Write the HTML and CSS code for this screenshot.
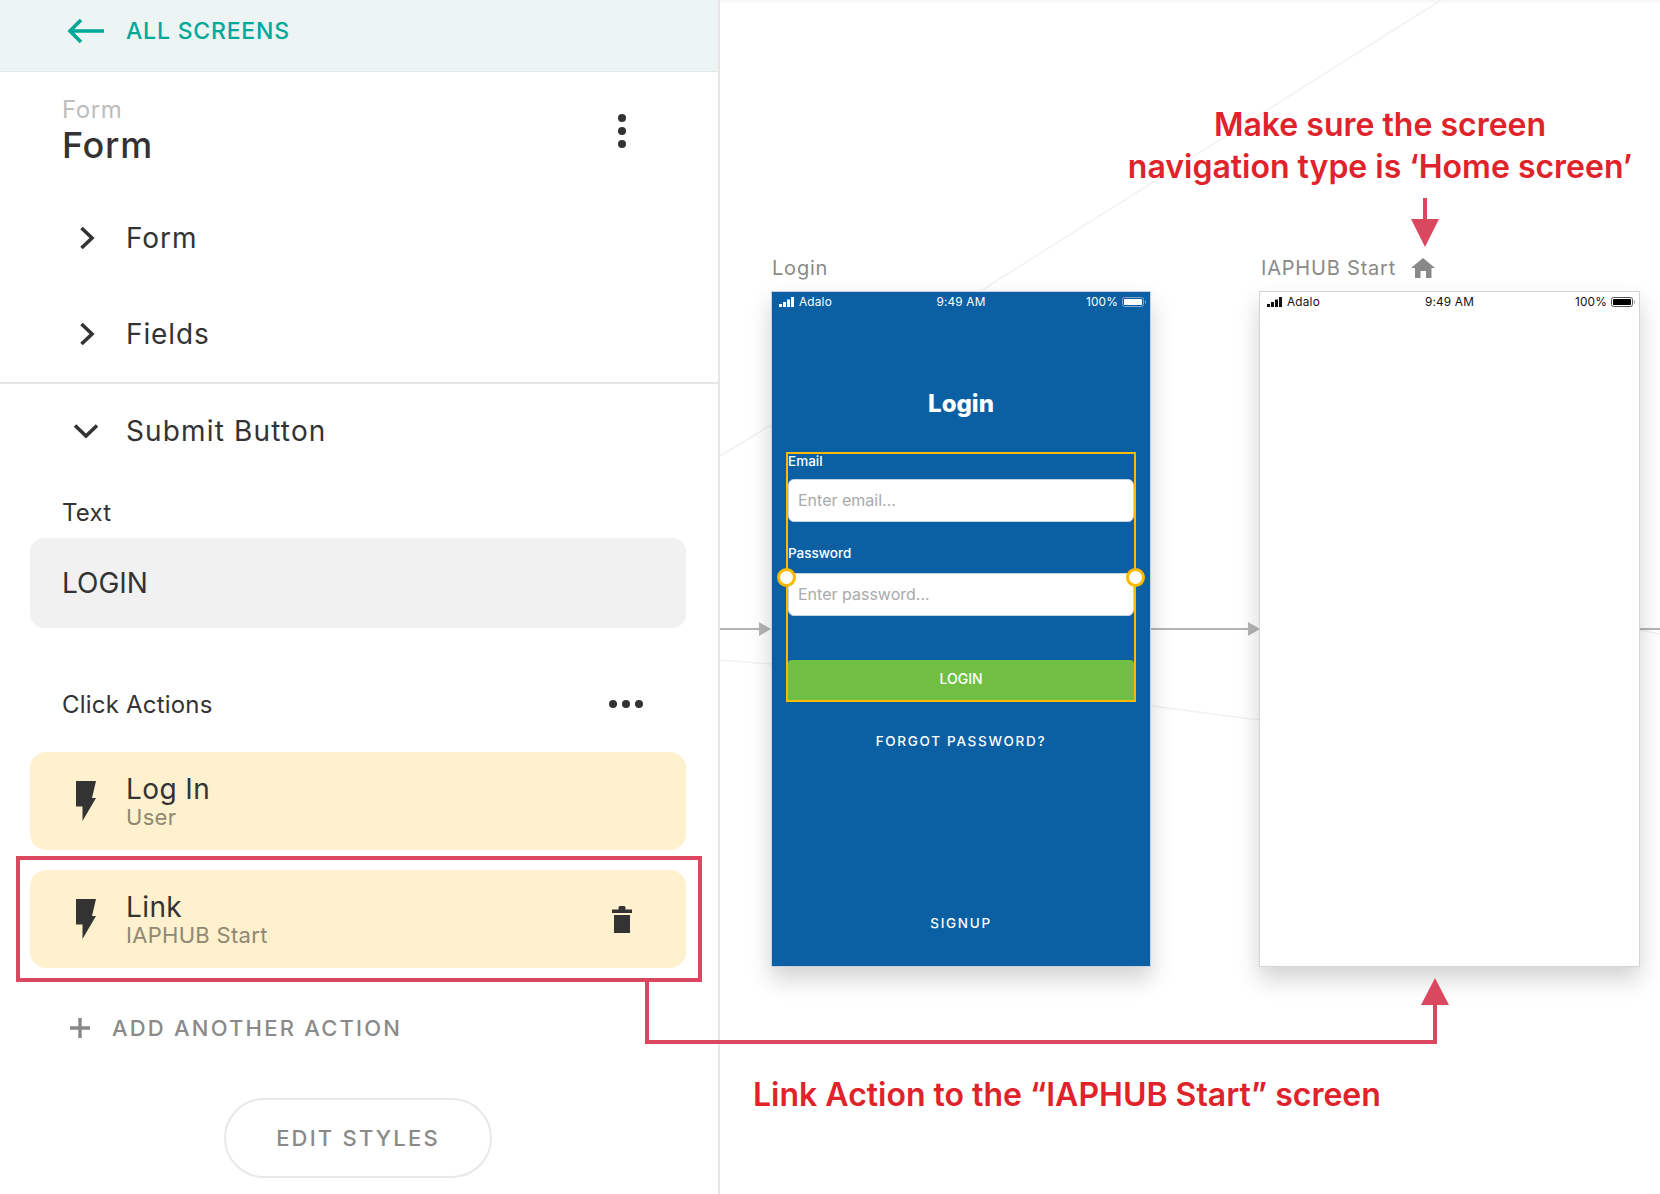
FILE: index.html
```html
<!DOCTYPE html>
<html lang="en">
<head>
<meta charset="utf-8">
<title>Form</title>
<link rel="stylesheet" href="styles.css">
</head>
<body>
<div class="app">
  <aside class="sidebar">
    <header class="back">
      <svg class="back-icon" width="38" height="26" viewBox="0 0 38 26"><path d="M37 13H3M14 2 3 13l11 11" fill="none" stroke="#00a898" stroke-width="3.6"/></svg>
      <span>ALL SCREENS</span>
    </header>
    <section class="title">
      <div>
        <div class="title-small">Form</div>
        <div class="title-big">Form</div>
      </div>
      <div class="kebab"><i></i><i></i><i></i></div>
    </section>
    <section class="group">
      <div class="row">
        <svg class="chev" width="16" height="24" viewBox="0 0 16 24"><path d="M2.5 2 13 12 2.5 22" fill="none" stroke="#333" stroke-width="3.6"/></svg>
        <span>Form</span>
      </div>
      <div class="row">
        <svg class="chev" width="16" height="24" viewBox="0 0 16 24"><path d="M2.5 2 13 12 2.5 22" fill="none" stroke="#333" stroke-width="3.6"/></svg>
        <span>Fields</span>
      </div>
    </section>
    <section class="submit">
      <div class="row row-open">
        <svg class="chev-down" width="26" height="16" viewBox="0 0 26 16"><path d="M2 2.5 13 13 24 2.5" fill="none" stroke="#333" stroke-width="3.6"/></svg>
        <span>Submit Button</span>
      </div>
      <div class="label label-text">Text</div>
      <div class="field">LOGIN</div>
      <div class="actions-head">
        <span class="label">Click Actions</span>
        <div class="dots"><i></i><i></i><i></i></div>
      </div>
      <div class="card">
        <svg class="bolt" width="20" height="40" viewBox="0 0 20 40"><path d="M0 0H20L16 17H20L6.500 40V25.500H0z" fill="#333"/></svg>
        <div class="card-text"><div class="card-title">Log In</div><div class="card-sub">User</div></div>
      </div>
      <div class="card card-second">
        <svg class="bolt" width="20" height="40" viewBox="0 0 20 40"><path d="M0 0H20L16 17H20L6.500 40V25.500H0z" fill="#333"/></svg>
        <div class="card-text"><div class="card-title">Link</div><div class="card-sub">IAPHUB Start</div></div>
        <svg class="trash" width="20" height="27" viewBox="0 0 20 27"><path d="M0 3.5h6.5V1.5Q6.5 0 8 0h4q1.500 0 1.500 1.500V3.500H20V7H0zM2 9h16v18H2z" fill="#333"/></svg>
      </div>
      <div class="add">
        <svg width="20" height="20" viewBox="0 0 20 20"><path d="M10 0v20M0 10h20" stroke="#888" stroke-width="3.400"/></svg>
        <span>ADD ANOTHER ACTION</span>
      </div>
      <div class="edit-wrap"><div class="edit">EDIT STYLES</div></div>
    </section>
  </aside>

  <main class="canvas">
    <svg class="wires" width="940" height="1194" viewBox="720 0 940 1194">
      <g fill="none" stroke="#f1f1f1" stroke-width="1.500">
        <path d="M1441 0 979 292"/>
        <path d="M720 456 771 425"/>
        <path d="M720 660 771 664"/>
        <path d="M1151 706 1260 720"/>
        <path d="M1640 630 1660 634"/>
      </g>
      <g stroke="#b5b5b5" stroke-width="2" fill="#b5b5b5">
        <path d="M720 629H760"/>
        <path d="M1151 629H1250"/>
        <path d="M1640 629H1660"/>
        <path d="M759 622 771 629 759 636z" stroke="none"/>
        <path d="M1248 622 1260 629 1248 636z" stroke="none"/>
      </g>
    </svg>

    <div class="screen screen-login">
      <div class="screen-name">Login</div>
      <div class="phone phone-blue">
        <div class="status">
          <div class="status-l">
            <svg width="15" height="10" viewBox="0 0 15 10"><path d="M0 7h3v3H0zM4 5h3v5H4zM8 2.500h3V10H8zM12 0h3v10h-3z" fill="currentColor"/></svg>
            <span>Adalo</span>
          </div>
          <div class="status-c">9:49 AM</div>
          <div class="status-r">
            <span>100%</span>
            <svg width="24" height="10" viewBox="0 0 24 10"><rect x=".5" y=".5" width="21" height="9" rx="2" fill="none" stroke="#7fa9cf"/><rect x="2" y="2" width="18" height="6" rx=".6" fill="#fff"/><path d="M23 3v4l1-1V4z" fill="#7fa9cf"/></svg>
          </div>
        </div>
        <h1 class="login-title">Login</h1>
        <div class="selection">
          <div class="f-label">Email</div>
          <div class="input">Enter email...</div>
          <div class="f-label f-label-2">Password</div>
          <div class="input">Enter password...</div>
          <div class="login-btn">LOGIN</div>
          <span class="handle handle-l"></span>
          <span class="handle handle-r"></span>
        </div>
        <div class="forgot">FORGOT PASSWORD?</div>
        <div class="signup">SIGNUP</div>
      </div>
    </div>

    <div class="screen screen-home">
      <div class="screen-name">
        <span>IAPHUB Start</span>
        <svg width="24" height="20" viewBox="0 0 24 20"><path d="M12 0 24 10H20.500V20H15V13H9.500V20H4V10H0z" fill="#888"/></svg>
      </div>
      <div class="phone phone-white">
        <div class="status">
          <div class="status-l">
            <svg width="15" height="10" viewBox="0 0 15 10"><path d="M0 7h3v3H0zM4 5h3v5H4zM8 2.500h3V10H8zM12 0h3v10h-3z" fill="currentColor"/></svg>
            <span>Adalo</span>
          </div>
          <div class="status-c">9:49 AM</div>
          <div class="status-r">
            <span>100%</span>
            <svg width="24" height="10" viewBox="0 0 24 10"><rect x=".5" y=".5" width="21" height="9" rx="2" fill="none" stroke="#555"/><rect x="2" y="2" width="18" height="6" rx=".6" fill="#000"/><path d="M23 3v4l1-1V4z" fill="#999"/></svg>
          </div>
        </div>
      </div>
    </div>
  </main>

  <svg class="marks" width="1660" height="1194" viewBox="0 0 1660 1194">
    <rect x="18" y="858" width="682" height="122" fill="none" stroke="#d9485f" stroke-width="4"/>
    <path d="M647 980V1042H1435V1004" fill="none" stroke="#d9485f" stroke-width="4"/>
    <path d="M1435 978 1449 1005H1421z" fill="#d9485f"/>
    <path d="M1425 198V220" stroke="#d9485f" stroke-width="4"/>
    <path d="M1411 219H1439L1425 247z" fill="#d9485f"/>
  </svg>
  <div class="note note-top">Make sure the screen<br>navigation type is ‘Home screen’</div>
  <div class="note note-bottom">Link Action to the “IAPHUB Start” screen</div>
</div>
</body>
</html>
```
FILE: styles.css
```css
* { box-sizing: border-box; }
html, body { margin: 0; height: 100%; }
body {
  background: #fff;
  font-family: Inter, "Liberation Sans", sans-serif;
  color: #333;
  overflow: hidden;
}
.app {
  position: relative;
  display: flex;
  width: 1660px;
  height: 1194px;
  overflow: hidden;
}

/* Sidebar */
.sidebar {
  position: relative;
  z-index: 2;
  flex: 0 0 720px;
  height: 1194px;
  background: #fff;
  border-right: 2px solid #e6e6e6;
}
.back {
  display: flex;
  align-items: center;
  height: 72px;
  padding: 0 0 10px 67px;
  gap: 21px;
  background: #ecf5f3;
  border-bottom: 1px solid #e4e9e8;
  color: #00a898;
  font-size: 23px;
  font-weight: 500;
  letter-spacing: .8px;
}
.title {
  display: flex;
  justify-content: space-between;
  height: 118px;
  padding: 24px 0 0 62px;
}
.title-small { font-size: 24px; line-height: 28px; color: #bdbdbd; letter-spacing: .6px; }
.title-big { font-size: 36px; line-height: 38px; font-weight: 500; margin-top: 2px; letter-spacing: .7px; }
.kebab {
  display: flex;
  flex-direction: column;
  gap: 5px;
  margin: 18px 92px 0 0;
}
.kebab i { width: 8px; height: 8px; border-radius: 50%; background: #333; }
.group { height: 194px; border-bottom: 2px solid #e6e6e6; }
.row {
  display: flex;
  align-items: center;
  height: 96px;
  padding-left: 79px;
  gap: 31px;
  font-size: 28px;
  letter-spacing: .9px;
}
.chev { flex: none; }
.row-open { height: 94px; padding-left: 73px; gap: 27px; letter-spacing: 1.15px; }
.label { font-size: 24px; letter-spacing: .2px; }
.label-text { margin: 20px 0 10px 62px; line-height: 30px; }
.field {
  display: flex;
  align-items: center;
  height: 90px;
  margin: 0 32px 0 30px;
  padding-left: 32px;
  border-radius: 14px;
  background: #f1f1f1;
  font-size: 28px;
}
.actions-head {
  display: flex;
  align-items: center;
  justify-content: space-between;
  height: 30px;
  margin-top: 61px;
  padding: 0 75px 0 62px;
}
.dots { display: flex; gap: 5px; }
.dots i { width: 8px; height: 8px; border-radius: 50%; background: #333; }
.card {
  display: flex;
  align-items: center;
  height: 98px;
  margin: 33px 32px 0 30px;
  padding: 0 54px 0 46px;
  border-radius: 16px;
  background: #fff1cd;
}
.card-second { margin-top: 20px; }
.bolt { flex: none; }
.card-text { flex: 1; margin-left: 30px; padding-top: 4px; }
.card-title { font-size: 28px; line-height: 30px; letter-spacing: .4px; margin-top: -2px; }
.card-sub { font-size: 22px; line-height: 26px; color: #8f8873; letter-spacing: .3px; }
.trash { flex: none; }
.add {
  display: flex;
  align-items: center;
  height: 30px;
  margin: 45px 0 0 70px;
  gap: 22px;
  font-size: 22px;
  font-weight: 500;
  letter-spacing: 2.2px;
  color: #8a8a8a;
}
.edit-wrap { display: flex; justify-content: center; padding-right: 2px; margin-top: 55px; }
.edit {
  display: flex;
  align-items: center;
  justify-content: center;
  width: 268px;
  height: 80px;
  border: 2px solid #e8e8e8;
  border-radius: 40px;
  font-size: 22px;
  font-weight: 500;
  letter-spacing: 2.2px;
  color: #8a8a8a;
}

/* Canvas */
.canvas {
  position: relative;
  flex: 1;
  height: 1194px;
  background: linear-gradient(#f5f5f5, #fff 4px);
}
.wires { position: absolute; left: 0; top: 0; }
.screen { position: absolute; top: 253px; }
.screen-login { left: 51px; width: 380px; }
.screen-home { left: 539px; width: 381px; }
.screen-name {
  display: flex;
  align-items: center;
  gap: 15px;
  height: 30px;
  margin-bottom: 8px;
  padding-left: 1px;
  font-size: 20px;
  letter-spacing: .8px;
  color: #8a8a8a;
}
.screen-home .screen-name { padding-left: 2px; }
.phone {
  position: relative;
  display: flex;
  flex-direction: column;
  height: 676px;
  border: 1px solid #d4d4d4;
  box-shadow: 0 12px 22px rgba(0, 0, 0, .18);
}
.phone-blue { background: #0b60a4; color: #fff; border-color: #c9d2dc; }
.phone-white { background: #fff; color: #111; }
.status {
  position: relative;
  display: flex;
  justify-content: space-between;
  align-items: center;
  height: 20px;
  padding: 0 4px 0 7px;
  font-size: 11.800px;
  letter-spacing: .2px;
}
.status-l, .status-r { display: flex; align-items: center; gap: 5px; }
.status-r { gap: 4px; }
.status-c { position: absolute; left: 0; right: 0; text-align: center; }
.login-title {
  margin: 75px 0 0;
  height: 34px;
  line-height: 34px;
  text-align: center;
  font-size: 24px;
  font-weight: 800;
}
.selection {
  position: relative;
  height: 250px;
  margin: 31px 14px 0;
  border: 2px solid #fdb900;
}
.f-label { height: 25px; line-height: 14px; font-size: 13.500px; font-weight: 500; }
.f-label-2 { margin-top: 19px; height: 32px; line-height: 24px; }
.input {
  height: 43px;
  line-height: 41px;
  padding-left: 9px;
  border: 1px solid #c7d3e0;
  border-radius: 6px;
  background: #fff;
  color: #aaa;
  font-size: 16px;
}
.login-btn {
  height: 40px;
  line-height: 38px;
  margin-top: 44px;
  border-radius: 4px 4px 0 0;
  background: #70bf44;
  text-align: center;
  font-size: 14px;
  font-weight: 500;
}
.handle {
  position: absolute;
  top: 114px;
  width: 19px;
  height: 19px;
  border: 3px solid #fdb900;
  border-radius: 50%;
  background: #fff;
}
.handle-l { left: -11px; }
.handle-r { right: -11px; }
.forgot, .signup {
  text-align: center;
  font-size: 13.500px;
  font-weight: 500;
  letter-spacing: 1.700px;
}
.forgot { margin-top: 30px; line-height: 18px; }
.signup { margin-top: 164px; line-height: 18px; }

/* Annotations */
.marks { position: absolute; left: 0; top: 0; z-index: 3; pointer-events: none; }
.note {
  position: absolute;
  z-index: 3;
  color: #e0222a;
  font-size: 32px;
  font-weight: 600;
  letter-spacing: 0;
  white-space: nowrap;
}
.note-top {
  left: 1080px;
  width: 600px;
  top: 104px;
  line-height: 42px;
  text-align: center;
}
.note-bottom { left: 753px; top: 1075px; line-height: 40px; }
```
